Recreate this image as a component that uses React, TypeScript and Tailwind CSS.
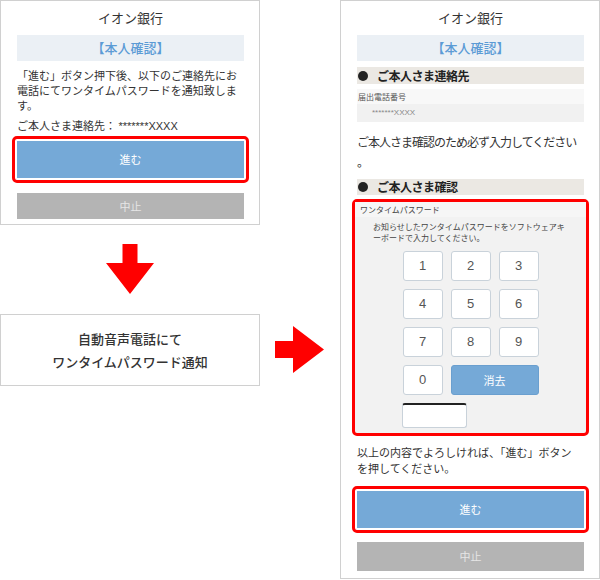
const keys = ["1", "2", "3", "4", "5", "6", "7", "8", "9"];

function Header() {
  return (
    <>
      <div className="h-[34px] flex items-center justify-center text-[13px] text-[#333]">イオン銀行</div>
      <div className="h-[26px] flex items-center justify-center bg-[#ebf0f5] text-[13px] font-medium text-[#5b9bd5]">【本人確認】</div>
    </>
  );
}

function NextButton({ className = "" }: { className?: string }) {
  return (
    <div className={`-mx-[5px] border-[3px] border-[#ff0000] rounded-[5px] p-[2px] ${className}`}>
      <div className="h-[37px] bg-[#75a9d7] flex items-center justify-center text-[11px] text-white">進む</div>
    </div>
  );
}

function CancelButton({ className = "" }: { className?: string }) {
  return <div className={`bg-[#b4b4b4] flex items-center justify-center text-[11px] text-[#e6e6e6] ${className}`}>中止</div>;
}

function SectionHead({ label, className = "" }: { label: string; className?: string }) {
  return (
    <div className={`h-[16px] bg-[#ebe8e3] flex items-center ${className}`}>
      <span className="w-[10px] h-[10px] rounded-full bg-[#222] ml-[1px]" />
      <span className="ml-[9px] text-[12px] font-bold text-[#222] tracking-[-0.5px]">{label}</span>
    </div>
  );
}

export default function App() {
  return (
    <div className="w-[600px] h-[580px] bg-white flex font-['Noto_Sans_CJK_JP',sans-serif]">
      {/* left column */}
      <div className="w-[260px] flex flex-col">
        <div className="h-[225px] border border-[#d0d0d0] pl-4 pr-[15px]">
          <Header />
          <p className="mt-[7px] text-[11px] leading-[15px] text-[#333]">
            「進む」ボタン押下後、以下のご連絡先にお<br />電話にてワンタイムパスワードを通知致しま<br />す。
          </p>
          <p className="mt-[5px] text-[11px] leading-[15px] text-[#333]">
            ご本人さま連絡先： <span className="font-['Liberation_Sans',sans-serif]">*******XXXX</span>
          </p>
          <NextButton className="mt-[2px]" />
          <CancelButton className="mt-[10px] h-[26px]" />
        </div>
        <div className="h-[89px] flex justify-center items-end">
          <svg width="48" height="50" viewBox="0 0 48 50" className="mb-[20px]">
            <polygon points="16.5,0 31.5,0 31.5,19 48,19 24,50 0,19 16.5,19" fill="#ff0000" />
          </svg>
        </div>
        <div className="h-[72px] border border-[#d0d0d0] flex flex-col items-center justify-center text-[13px] leading-[23px] font-medium text-[#333]">
          <div>自動音声電話にて</div>
          <div>ワンタイムパスワード通知</div>
        </div>
      </div>

      {/* arrow */}
      <div className="w-[80px] pt-[326px] pl-[15px]">
        <svg width="49" height="47" viewBox="0 0 49 47">
          <polygon points="0,15 18,15 18,0 49,23.5 18,47 18,32 0,32" fill="#ff0000" />
        </svg>
      </div>

      {/* right panel */}
      <div className="w-[260px] h-[579px] border border-[#d0d0d0] pl-4 pr-[15px]">
        <Header />
        <SectionHead label="ご本人さま連絡先" className="mt-[6px] h-[17px]" />
        <div className="mt-[5px] h-[15px] bg-[#f8f8f8] flex items-center pl-[1px] text-[8px] text-[#555]">届出電話番号</div>
        <div className="h-[18px] bg-[#f1f1f1] flex items-center pl-[15px] text-[8px] text-[#888] font-['Liberation_Sans',sans-serif]">*******XXXX</div>
        <p className="mt-[10px] text-[12px] leading-[20px] tracking-[-1px] text-[#333]">
          ご本人さま確認のため必ず入力してください<br />。
        </p>
        <SectionHead label="ご本人さま確認" className="mt-[7px]" />
        <div className="mt-[4px] -mx-[5px] border-[3px] border-[#ff0000] rounded-[5px] bg-[#f2f2f2] pb-[5px]">
          <div className="h-[15px] bg-[#f6f6f6] flex items-center pl-[5px] text-[8px] text-[#444]">ワンタイムパスワード</div>
          <p className="mt-[4px] pl-[18px] text-[8px] leading-[11px] text-[#444]">
            お知らせしたワンタイムパスワードをソフトウェアキ<br />ーボードで入力してください。
          </p>
          <div className="w-[136px] mx-auto mt-[8px]">
            <div className="grid grid-cols-3 gap-[8px]">
              {keys.map((k) => (
                <div key={k} className="h-[30px] bg-white border border-[#c9d2da] rounded-[3px] flex items-center justify-center text-[13px] text-[#555] font-['Liberation_Sans',sans-serif]">
                  {k}
                </div>
              ))}
              <div className="h-[30px] bg-white border border-[#c9d2da] rounded-[3px] flex items-center justify-center text-[13px] text-[#555] font-['Liberation_Sans',sans-serif]">0</div>
              <div className="col-span-2 h-[30px] bg-[#75a9d7] border border-[#6a9fcf] rounded-[3px] flex items-center justify-center text-[11px] text-white">消去</div>
            </div>
            <div className="mt-[8px] -ml-[1px] w-[65px] h-[25px] bg-white border border-[#c9d2da] border-t-2 border-t-[#222] rounded-[3px]" />
          </div>
        </div>
        <p className="mt-[8px] text-[11px] leading-[16px] text-[#333]">
          以上の内容でよろしければ、「進む」ボタン<br />を押してください。
        </p>
        <NextButton className="mt-[10px]" />
        <CancelButton className="mt-[9px] h-[29px]" />
      </div>
    </div>
  );
}
